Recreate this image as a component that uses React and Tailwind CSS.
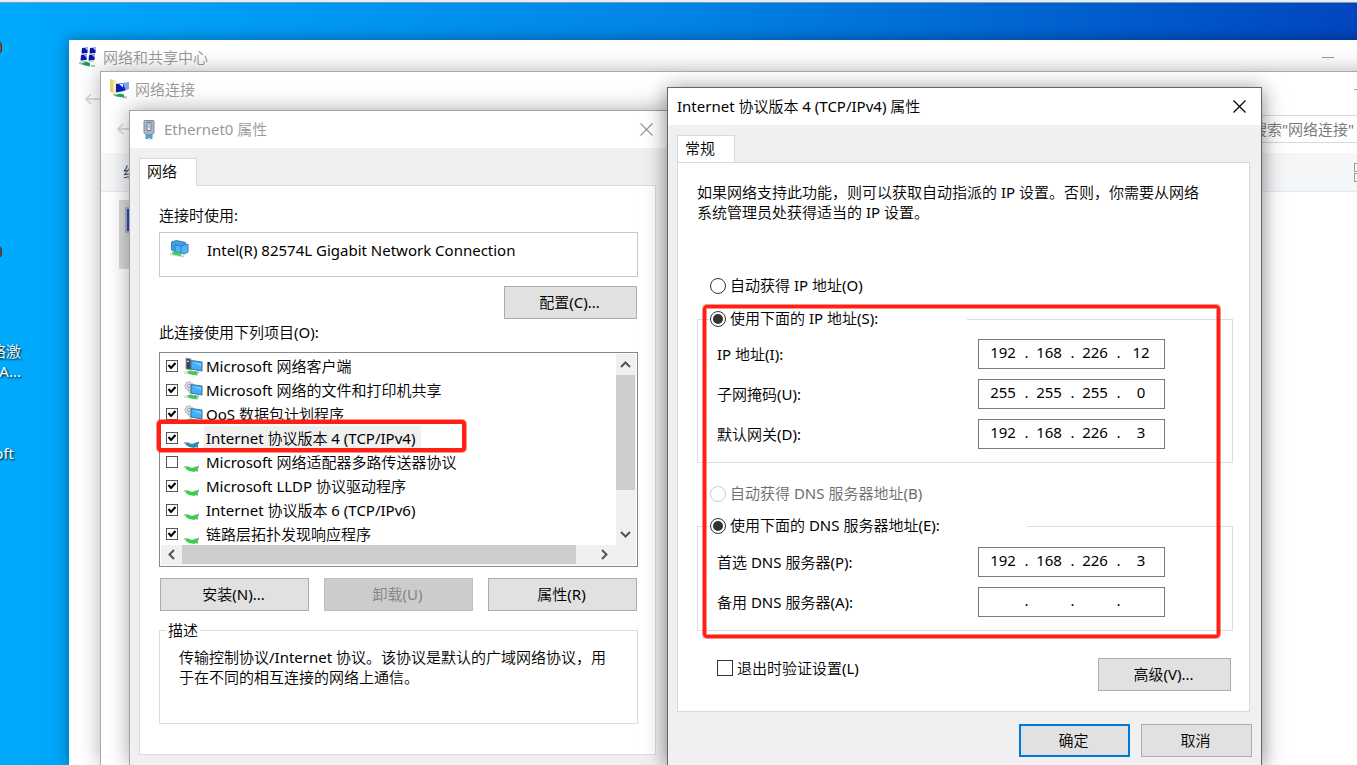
import React, { useState } from 'react';

const components = [
  { name: 'Microsoft 网络客户端', icon: 'client', enabled: true },
  { name: 'Microsoft 网络的文件和打印机共享', icon: 'service', enabled: true },
  { name: 'QoS 数据包计划程序', icon: 'service', enabled: true },
  { name: 'Internet 协议版本 4 (TCP/IPv4)', icon: 'protocol', enabled: true },
  { name: 'Microsoft 网络适配器多路传送器协议', icon: 'protocol', enabled: false },
  { name: 'Microsoft LLDP 协议驱动程序', icon: 'protocol', enabled: true },
  { name: 'Internet 协议版本 6 (TCP/IPv6)', icon: 'protocol', enabled: true },
  { name: '链路层拓扑发现响应程序', icon: 'protocol', enabled: true },
];

const ipRows = [
  { label: 'IP 地址(I):', value: ['192', '168', '226', '12'] },
  { label: '子网掩码(U):', value: ['255', '255', '255', '0'] },
  { label: '默认网关(D):', value: ['192', '168', '226', '3'] },
];

const dnsRows = [
  { label: '首选 DNS 服务器(P):', value: ['192', '168', '226', '3'] },
  { label: '备用 DNS 服务器(A):', value: ['', '', '', ''] },
];

const SharingCenterIcon = () => (
  <svg width="20" height="20" viewBox="0 0 20 20">
    {[[4, 1], [12, 1], [3, 8], [11, 8]].map(([x, y]) => (
      <g key={`${x}-${y}`}>
        <path d={`M${x} ${y}l6 -.5 -.5 5.500 -6 .5z`} fill="#0c16a8" />
        <path d={`M${x + 3} ${y}l3 -.3 -.3 3z`} fill="#a9c6fa" />
        <path d={`M${x} ${y + 6.5}h5`} stroke="#c3cbe0" />
      </g>
    ))}
    <path d="M1 16l4 .5M13 18.500l4 1" stroke="#b7bcc4" strokeWidth="2" />
    <path d="M3 17l5 -2.500 4 1.500v3.500l-5 -1z" fill="#17a548" />
  </svg>
);

const ConnectionsIcon = () => (
  <svg width="20" height="20" viewBox="0 0 20 20">
    <path d="M0 0l5 1.500v13l-5 -2z" fill="#e6cf78" />
    <path d="M3 2h4v11l-4 1z" fill="#f8ebad" />
    <path d="M12 4l7 -1v7l-6 2z" fill="#7ba6f0" />
    <path d="M6 5l7 -1 1 8 -8 1.500z" fill="#0b1cb6" />
    <path d="M9 5l4 -.5v4z" fill="#e4edff" />
    <path d="M13 5l3 6 -3 1z" fill="#1532c8" />
    <path d="M3 15.500l3 .5M13 18l4 .5" stroke="#b7bcc4" strokeWidth="2" />
    <path d="M5 16l5 -1.500 4 1v3l-8 -1z" fill="#18ad52" />
  </svg>
);

const PlugIcon = () => (
  <svg width="20" height="20" viewBox="0 0 20 20">
    <path d="M6.500 13h7v6h-1.500l-1 1v-2h-1.500v2l-1 -1h-2z" fill="#4ba6c8" />
    <path d="M5.500 .5h9l.5 1v11l-1.500 2h-7l-1.500 -2v-11z" fill="#a9b6c6" stroke="#7f8d9e" />
    <path d="M8 2.500h4v8h-4z" fill="#e6ecf3" stroke="#6d7c8e" />
    <path d="M10 3v5" stroke="#8a98aa" />
  </svg>
);

const AdapterIcon = () => (
  <svg width="20" height="18" viewBox="0 0 20 18">
    <path d="M0 13l14 2.500v2l-14 -2.500z" fill="#cfd3d6" />
    <path d="M1.500 2l5 -1.500 9 2v8l-11 1 -3 -1.500z" fill="#3ba0e6" stroke="#3b7fae" />
    <path d="M5 5l6 1 7 -2v8l-4 2 -9 -2.500z" fill="#4db5fb" stroke="#3b7fae" />
    <path d="M11 6v7" stroke="#3b7fae" />
    <path d="M2 12.500l3 -1 6 1.500v3l-8 -1.500z" fill="#3ccf5f" />
  </svg>
);

const ComponentIcon = ({ type, selected }) => {
  if (type === 'protocol') {
    return (
      <svg width="20" height="20" viewBox="0 0 20 20" className="shrink-0">
        <path d="M0 13l4 .5v2l-4 -1z" fill={selected ? '#9db4c4' : '#c4c9cc'} />
        <path d="M10 14.500l5 -2v2.500zM9 17l5 2v-3.500z" fill={selected ? '#56809b' : '#a3a9ac'} />
        <path d="M1 14l3 -.5 4 1.500 4 -1.500 2 1v2.500l-4 2 -5 -1 -3 -2z" fill={selected ? '#2a8fb0' : '#3ecb50'} />
      </svg>
    );
  }
  return (
    <svg width="20" height="20" viewBox="0 0 20 20" className="shrink-0">
      <path d="M0 14.500l15 2v2l-15 -2z" fill="#d5d9dc" />
      <path d="M3 14.500l4 -1 6 2v3l-8 -1.500z" fill="#3ecb50" />
      {type === 'client' ? (
        <g>
          <path d="M2 1l5 1v11l-5 -1z" fill="#3d4650" stroke="#9ba4ac" />
          <path d="M3 4l2 .5" stroke="#fff" />
        </g>
      ) : (
        <g>
          <path d="M3 8l3 6 3 -1v-5z" fill="#c5ccd3" />
          <circle cx="5" cy="5" r="4" fill="#d7dde3" stroke="#8f9aa5" strokeDasharray="2 1" />
          <circle cx="5" cy="5" r="1.500" fill="#fff" stroke="#8f9aa5" />
        </g>
      )}
      <path d="M7 3.500l11 1.500v9l-11 -2z" fill="#42b0fa" stroke="#37709a" />
      <path d="M8 5l9 1.500v3z" fill="#73c8ff" />
      <path d="M10 14.500l5 1" stroke="#78838d" />
    </svg>
  );
};

const BackArrow = () => (
  <svg width="16" height="12" viewBox="0 0 16 12" fill="none" stroke="#d3d3d3" strokeWidth="1.500">
    <path d="M6 1L1 6l5 5M1 6h15" />
  </svg>
);

const CloseIcon = ({ color }) => (
  <svg width="13" height="13" viewBox="0 0 13 13" stroke={color} strokeWidth="1.200">
    <path d="M.5 .5l12 12M12.500 .5l-12 12" />
  </svg>
);

const Chevron = ({ d }) => (
  <svg width="11" height="11" viewBox="0 0 11 11" fill="none" stroke="#555" strokeWidth="2">
    <path d={d} />
  </svg>
);

const WindowControls = () => (
  <div className="ml-auto flex">
    <button aria-label="最小化" className="w-[46px] h-8 grid place-items-center">
      <span className="block w-3 h-px bg-[#999]" />
    </button>
    <button aria-label="最大化" className="w-[46px] h-8 grid place-items-center">
      <span className="block w-3 h-3 border border-[#999]" />
    </button>
    <button aria-label="关闭" className="w-[46px] h-8 grid place-items-center">
      <CloseIcon color="#999" />
    </button>
  </div>
);

const PushButton = ({ className = '', children, ...props }) => (
  <button
    className={`h-[33px] pb-[2px] pr-[2px] border border-[#adadad] bg-[#e1e1e1] text-center disabled:border-[#bfbfbf] disabled:bg-[#cccccc] disabled:text-[#838383] ${className}`}
    {...props}
  >
    {children}
  </button>
);

const Radio = ({ id, label, ...props }) => (
  <div className="flex items-center h-5 gap-1">
    <input
      type="radio"
      id={id}
      className="peer appearance-none shrink-0 w-4 h-4 p-[2px] rounded-full border border-[#333] bg-white bg-clip-content checked:bg-[#333] disabled:border-[#ccc]"
      {...props}
    />
    <label htmlFor={id} className="pb-[2px] peer-disabled:text-[#6d6d6d]">{label}</label>
  </div>
);

const AddressRow = ({ label, value }) => (
  <div role="group" aria-label={label} className="grid grid-cols-[261px_187px] items-center">
    <span>{label}</span>
    <div className="flex h-[30px] pl-[6px] pb-1 items-center border border-[#7a7a7a] bg-white">
      {value.map((octet, i) => (
        <React.Fragment key={i}>
          {i > 0 && <span className="w-[10px] pl-px text-center">.</span>}
          <input
            type="text"
            defaultValue={octet}
            maxLength={3}
            aria-label={`${label} ${i + 1}`}
            className="w-9 h-5 text-center outline-none bg-transparent"
          />
        </React.Fragment>
      ))}
    </div>
  </div>
);

const Tab = ({ children }) => (
  <button role="tab" aria-selected="true" className="relative block w-[58px] h-7 -mb-px pl-[7px] pb-1 border border-b-0 border-[#d9d9d9] bg-white text-left">
    {children}
  </button>
);

const Desktop = () => (
  <div className="absolute left-0 top-0 w-5 text-white [text-shadow:1px_1px_2px_#000]">
    <div className="absolute -left-3 top-[41px] w-[14px] h-[13px] rounded-sm border border-[#2c3a44] bg-[#b0421c]" />
    <div className="absolute -left-3 top-[246px] w-[14px] h-[12px] rounded-sm border border-[#2c3a44] bg-[#97303a]" />
    <div className="absolute left-0 top-[341px] w-[21px] flex flex-col items-end leading-5 whitespace-nowrap">
      <span>络激</span>
      <span>A...</span>
    </div>
    <div className="absolute left-0 top-[443px] w-[14px] flex justify-end leading-5">oft</div>
  </div>
);

const SharingCenterWindow = () => (
  <div className="absolute left-[69px] top-10 -right-[86px] bottom-0 bg-white shadow-[0_0_14px_rgba(0,0,0,0.4)]">
    <div className="flex items-center pl-[9px] pt-px text-[#999]">
      <SharingCenterIcon />
      <h2 className="ml-[5px]">网络和共享中心</h2>
      <WindowControls />
    </div>
    <button aria-label="返回" className="block ml-4 mt-5">
      <BackArrow />
    </button>
  </div>
);

const ConnectionsWindow = () => (
  <div className="absolute left-[100px] top-[71px] -right-[118px] bottom-0 border-l border-t border-[#aaa] bg-white shadow-[0_0_20px_rgba(0,0,0,0.3)]">
    <div className="flex items-center pl-[9px] pt-px text-[#999]">
      <ConnectionsIcon />
      <h2 className="ml-[5px]">网络连接</h2>
      <WindowControls />
    </div>
    <div className="flex items-center h-12 pl-4 pr-[100px]">
      <button aria-label="返回">
        <BackArrow />
      </button>
      <input
        type="search"
        aria-label="搜索"
        placeholder='搜索"网络连接"'
        className="ml-auto w-[132px] h-7 pl-2 border border-[#d9d9d9] outline-none placeholder:text-[#757575]"
      />
    </div>
    <div className="flex items-center justify-between h-[39px] pl-[22px] pr-[100px] border-b border-[#e5e8ec] bg-[#f4f6f8] text-[#1e395b]">
      <button>组织</button>
      <button aria-label="视图" className="grid grid-cols-2 gap-px">
        <span className="block w-[10px] h-[9px] border border-[#999]" />
        <span className="block w-[10px] h-[9px] border border-[#999]" />
        <span className="block w-[10px] h-[9px] border border-[#999]" />
        <span className="block w-[10px] h-[9px] border border-[#999]" />
      </button>
    </div>
    <div className="ml-[18px] mt-2 w-64 h-[69px] pt-[7px] pl-[6px] bg-[#d9d9d9]">
      <div className="w-8 h-[26px] border-2 border-[#aeb2b8] bg-[#2450cf]" />
    </div>
  </div>
);

const EthernetDialog = () => {
  const [selected, setSelected] = useState(3);

  return (
    <div role="dialog" aria-label="Ethernet0 属性" className="absolute left-[129px] top-[110px] w-[540px] bottom-0 min-h-[655px] border border-b-0 border-[#a3a3a3] bg-[#f0f0f0] shadow-[0_0_20px_rgba(0,0,0,0.35)]">
      <div className="flex items-center h-[37px] pl-[9px] pr-[15px] bg-white text-[#999]">
        <PlugIcon />
        <h2 className="ml-[5px] pb-[2px]">Ethernet0 属性</h2>
        <button aria-label="关闭" className="ml-auto">
          <CloseIcon color="#999" />
        </button>
      </div>

      <div className="pt-[10px] pl-[9px] pr-3">
        <Tab>网络</Tab>
        <div role="tabpanel" className="pl-[19px] pr-[17px] pt-[19px] pb-[30px] border border-[#d9d9d9] bg-white">
          <p>连接时使用:</p>
          <div className="flex items-start h-[45px] mt-[7px] pl-[10px] pt-[7px] border border-[#c8c8c8]">
            <AdapterIcon />
            <span className="ml-[17px]">Intel(R) 82574L Gigabit Network Connection</span>
          </div>
          <div className="flex justify-end mt-[9px] pr-px">
            <PushButton className="w-[133px]">配置(C)...</PushButton>
          </div>

          <p className="mt-[3px]">此连接使用下列项目(O):</p>
          <div className="relative mt-[10px]">
            <div className="h-[215px] p-px border border-[#828790] flex flex-col">
              <div className="flex flex-1 min-h-0">
                <ul className="flex-1 overflow-hidden">
                  {components.map((item, i) => (
                    <li key={item.name} className="flex items-center h-6 pl-[5px]" onClick={() => setSelected(i)}>
                      <span className="relative w-3 h-3">
                        <input
                          type="checkbox"
                          id={`component-${i}`}
                          defaultChecked={item.enabled}
                          className="peer block appearance-none w-3 h-3 border border-[#555] bg-white"
                        />
                        <svg viewBox="0 0 12 12" className="absolute inset-0 hidden peer-checked:block pointer-events-none" fill="none" stroke="#000" strokeWidth="2">
                          <path d="M2.500 5l2.500 3 4.500 -5" />
                        </svg>
                      </span>
                      <span className="w-[26px] pl-[6px] pt-px">
                        <ComponentIcon type={item.icon} selected={selected === i} />
                      </span>
                      <label
                        htmlFor={`component-${i}`}
                        className={`h-6 pl-[2px] pr-[6px] leading-6 whitespace-nowrap ${selected === i ? 'bg-[#f0f0f0]' : ''}`}
                      >
                        {item.name}
                      </label>
                    </li>
                  ))}
                </ul>
                <div className="flex flex-col items-center w-5 pr-px bg-[#f0f0f0]">
                  <div className="h-[21px] grid place-items-center"><Chevron d="M1 8l4.500 -4.500L10 8" /></div>
                  <div className="w-full h-[115px] bg-[#cdcdcd]" />
                  <div className="h-[21px] mt-auto grid place-items-center"><Chevron d="M1 3l4.500 4.500L10 3" /></div>
                </div>
              </div>
              <div className="flex items-center h-5 pr-[21px] pb-px bg-[#f0f0f0]">
                <div className="w-[21px] grid place-items-center"><Chevron d="M8 1L3.500 5.500L8 10" /></div>
                <div className="w-[394px] h-full bg-[#cdcdcd]" />
                <div className="w-[21px] ml-auto grid place-items-center"><Chevron d="M3 1l4.500 4.500L3 10" /></div>
              </div>
            </div>
            {/* Highlight around the IPv4 entry */}
            <div className="absolute -left-[2px] top-[68px] w-[309px] h-8 rounded-[4px] border-4 border-[#ff1f14] shadow-[0_0_0_1px_rgba(255,31,20,0.5)] pointer-events-none" />
          </div>

          <div className="flex justify-between mt-[11px] px-px">
            <PushButton className="w-[149px]">安装(N)...</PushButton>
            <PushButton className="w-[149px]" disabled>卸载(U)</PushButton>
            <PushButton className="w-[149px]">属性(R)</PushButton>
          </div>

          <fieldset className="mt-[9px] pl-[19px] pr-5 pt-[7px] pb-9 border border-[#dcdcdc]">
            <legend className="-ml-[13px] px-[2px]">描述</legend>
            <p>传输控制协议/Internet 协议。该协议是默认的广域网络协议，用于在不同的相互连接的网络上通信。</p>
          </fieldset>
        </div>
      </div>
    </div>
  );
};

const Ipv4Dialog = () => (
  <div role="dialog" aria-label="Internet 协议版本 4 (TCP/IPv4) 属性" className="absolute left-[667px] top-[87px] w-[595px] bottom-0 min-h-[678px] border border-b-0 border-[#666] bg-[#f0f0f0] shadow-[0_3px_20px_rgba(0,0,0,0.5)]">
    <div className="flex items-center h-[37px] pl-[9px] pr-[15px] pb-px bg-white">
      <h2>Internet 协议版本 4 (TCP/IPv4) 属性</h2>
      <button aria-label="关闭" className="ml-auto">
        <CloseIcon color="#000" />
      </button>
    </div>

    <div className="pt-[10px] pl-[9px] pr-[11px]">
      <Tab>常规</Tab>
      <div role="tabpanel" className="relative pl-[19px] pr-4 pt-[19px] pb-5 border border-[#d9d9d9] bg-white">
        <p className="pr-6">如果网络支持此功能，则可以获取自动指派的 IP 设置。否则，你需要从网络系统管理员处获得适当的 IP 设置。</p>

        <div className="mt-[54px] pl-[13px]">
          <Radio id="ip-auto" name="ip" label="自动获得 IP 地址(O)" />
        </div>
        <fieldset className="mt-[13px] pl-[19px] pt-[10px] pb-[13px] border border-[#dcdcdc]">
          <legend className="-ml-[7px] w-[257px]">
            <Radio id="ip-manual" name="ip" label="使用下面的 IP 地址(S):" defaultChecked />
          </legend>
          <div className="flex flex-col gap-[10px]">
            {ipRows.map((row) => <AddressRow key={row.label} {...row} />)}
          </div>
        </fieldset>

        <div className="mt-[21px] pl-[13px]">
          <Radio id="dns-auto" name="dns" label="自动获得 DNS 服务器地址(B)" disabled />
        </div>
        <fieldset className="mt-3 pl-[19px] pt-[11px] pb-[13px] border border-[#dcdcdc]">
          <legend className="-ml-[7px] w-[317px]">
            <Radio id="dns-manual" name="dns" label="使用下面的 DNS 服务器地址(E):" defaultChecked />
          </legend>
          <div className="flex flex-col gap-[10px]">
            {dnsRows.map((row) => <AddressRow key={row.label} {...row} />)}
          </div>
        </fieldset>

        <div className="flex items-start justify-between mt-[27px] pl-5 pr-[2px]">
          <div className="flex items-center h-5 gap-1">
            <input type="checkbox" id="validate" className="appearance-none w-4 h-4 border border-[#333] bg-white checked:bg-[#333] checked:bg-clip-content p-[2px]" />
            <label htmlFor="validate">退出时验证设置(L)</label>
          </div>
          <PushButton className="w-[133px]">高级(V)...</PushButton>
        </div>

        {/* Highlight around the address settings */}
        <div className="absolute left-[25px] top-[142px] w-[517px] h-[333px] rounded-[4px] border-3 border-[#ff1f14] shadow-[0_0_0_1px_rgba(255,31,20,0.5),inset_0_0_0_1px_rgba(255,31,20,0.5)] pointer-events-none" />
      </div>
    </div>

    <div className="flex justify-end gap-[11px] mt-3 pr-[9px]">
      <button className="w-[111px] h-[33px] pb-[2px] pr-[2px] border-2 border-[#0078d7] bg-[#e1e1e1]">确定</button>
      <PushButton className="w-[111px]">取消</PushButton>
    </div>
  </div>
);

const App = () => (
  <div className="relative min-h-screen overflow-hidden bg-linear-to-r from-[#00aafc] via-[#0284e6] to-[#0345bf] font-['Noto_Sans','Noto_Sans_CJK_SC_DemiLight','Noto_Sans_CJK_SC',sans-serif] text-[15px] leading-5 text-black">
    <div className="h-[3px] bg-[#ececec] border-b border-[#6f9fc0]" />
    <Desktop />
    <SharingCenterWindow />
    <ConnectionsWindow />
    <EthernetDialog />
    <Ipv4Dialog />
  </div>
);

export default App;
